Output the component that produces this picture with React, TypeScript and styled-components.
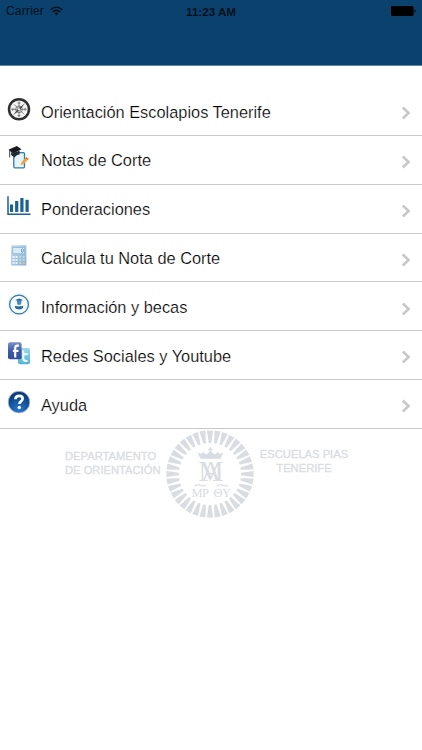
import type { ReactNode } from "react";
import styled, { createGlobalStyle } from "styled-components";

const navy = "#0a416d";
const sealGrey = "#d9dde1";
const chartBlue = "#1a628f";

const GlobalStyle = createGlobalStyle`
  body {
    margin: 0;
    background: #fff;
    font-family: "Liberation Sans", Arial, sans-serif;
  }
`;

const Screen = styled.div`
  width: 100%;
  height: 750px;
  overflow: hidden;
  background: #fff;
`;

const Header = styled.header`
  box-sizing: border-box;
  height: 66px;
  background: ${navy};
  border-bottom: 1px solid #5f87a5;
`;

const StatusBar = styled.div`
  display: grid;
  grid-template-columns: 1fr auto 1fr;
  align-items: center;
  height: 22px;
  padding: 0 6px;
  color: #03101c;
`;

const Carrier = styled.div`
  display: flex;
  align-items: center;
  gap: 6px;
  font-size: 12px;
  letter-spacing: 0.2px;
`;

const Clock = styled.div`
  font-size: 11.6px;
  font-weight: bold;
`;

const Battery = styled.svg`
  justify-self: end;
`;

const Menu = styled.ul`
  list-style: none;
  margin: 0;
  padding: 21px 0 0;
`;

const Row = styled.li`
  display: flex;
  align-items: flex-start;
  box-sizing: border-box;
  height: 48.87px;
  padding: 9.5px 11px 0 7px;
  border-bottom: 1px solid #c8c8c8;
`;

const IconBox = styled.svg`
  width: 24px;
  height: 24px;
  flex: none;
`;

/* the white stroke trims the glyphs down to a light weight */
const Label = styled.span`
  flex: 1;
  margin: 5px 0 0 10px;
  color: #000;
  font-size: 16.38px;
  line-height: 20px;
  white-space: nowrap;
  -webkit-text-stroke: 0.22px #fff;
`;

const Arrow = styled.svg`
  flex: none;
  margin-top: 9.7px;
`;

const Watermark = styled.div`
  display: flex;
  align-items: flex-start;
  margin-left: 65px;
  color: ${sealGrey};
`;

const WatermarkText = styled.div<{ $top: number; $align: "left" | "center" }>`
  width: 96px;
  margin-top: ${(p) => p.$top}px;
  font-size: 11.2px;
  line-height: 13.6px;
  text-align: ${(p) => p.$align};
  white-space: nowrap;
  -webkit-text-stroke: 0.3px ${sealGrey};
`;

const SealBox = styled.svg`
  flex: none;
  margin: 1px 2px 0 5px;
`;

const CompassIcon = () => (
  <IconBox viewBox="0 0 24 24">
    <circle cx="12" cy="12.3" r="10" fill="#f4f4f4" stroke="#303033" strokeWidth="2.5" />
    <g stroke="#666" strokeWidth="0.8" fill="none">
      <path d="M12 4.5v15.6M4.2 12.3h15.6M7 7.3l10 10" />
      <circle cx="12" cy="12.3" r="3.4" />
      <path d="M10.5 6h3M10.5 18.6h3M5.8 10.8v3M18.2 10.8v3" />
    </g>
    <path d="M18 6.3L12.8 13.1 6 18.3l5.2-6.8z" fill="#444" />
    <circle cx="12" cy="12.3" r="1.1" fill="#fff" />
  </IconBox>
);

const GradesIcon = () => (
  <IconBox viewBox="0 0 24 24">
    <rect x="6.8" y="7.6" width="10.7" height="15.2" rx="1" fill="#e5f3fa" stroke="#317da9" strokeWidth="1.3" />
    <path d="M13.6 20.2l1-3.2 4.8-5 2.2 2-4.8 5z" fill="#f4a33c" />
    <path d="M18.5 13l1-1.1 2.2 2-1 1.1z" fill="#d97b32" />
    <path d="M1.4 4.8L9.8 1l4.7 3.3-8.2 4.3z" fill="#17191c" />
    <path d="M4.1 7l2.2 1.6L12.6 5.4v4.2c-2.5.3-4 1.4-5.2 3L4.1 10z" fill="#24272b" />
    <path d="M2.7 5.5v7" stroke="#24272b" strokeWidth="0.9" />
  </IconBox>
);

const ChartIcon = () => (
  <IconBox viewBox="0 0 24 24">
    <path d="M1 2.2v18.1h22.5" fill="none" stroke={chartBlue} strokeWidth="1.5" />
    <g fill={chartBlue}>
      <rect x="2.9" y="10.5" width="3.2" height="7.4" />
      <rect x="8.1" y="7" width="3.2" height="10.9" />
      <rect x="13.3" y="4" width="3.2" height="13.9" />
      <rect x="18.5" y="5.8" width="3.2" height="12.1" />
    </g>
  </IconBox>
);

const CalculatorIcon = () => (
  <IconBox viewBox="0 0 24 24">
    <defs>
      <linearGradient id="calc" x1="0" y1="0" x2="1" y2="1">
        <stop offset="0" stopColor="#c3dbee" />
        <stop offset="1" stopColor="#8aafcf" />
      </linearGradient>
    </defs>
    <rect x="4.2" y="2.2" width="15.2" height="20.4" rx="0.8" fill="url(#calc)" />
    <rect x="5.8" y="4.4" width="11.8" height="6.4" fill="#d8edf9" stroke="#7ba7cc" strokeWidth="0.6" />
    <ellipse cx="15.4" cy="7.6" rx="1" ry="1.8" fill="none" stroke="#5487b7" strokeWidth="0.8" />
    <g fill="#e6f3fd">
      <rect x="5.6" y="13" width="2" height="2" />
      <rect x="8.5" y="13" width="2" height="2" />
      <rect x="5.6" y="16" width="2" height="2" />
      <rect x="8.5" y="16" width="2" height="2" />
      <rect x="5.6" y="19" width="2" height="2" />
      <rect x="8.5" y="19" width="2" height="2" />
    </g>
    <g fill="#b9d6ea">
      <rect x="12.2" y="13" width="2.2" height="2" />
      <rect x="15.5" y="13" width="2.2" height="2" />
      <rect x="12.2" y="16" width="2.2" height="2" />
      <rect x="15.5" y="16" width="2.2" height="2" />
      <rect x="12.2" y="19" width="2.2" height="2" />
    </g>
    <rect x="15.5" y="19" width="2.4" height="2" fill="#d9c391" />
  </IconBox>
);

const StudentIcon = () => (
  <IconBox viewBox="0 0 24 24">
    <circle cx="12" cy="12.5" r="11.4" fill="#eef4f8" />
    <circle cx="12" cy="12.5" r="9.4" fill="#f5fbff" stroke="#3479ad" strokeWidth="1.3" />
    <path d="M8.3 8l3.9-1.6L16 8l-3.8 1.6z" fill="#23659b" />
    <path d="M9.9 8.6h4.5v2.2a2.2 2.2 0 0 1-4.5 0z" fill="#4b8bbd" />
    <path d="M8 13.8c1.4.8 6.8.8 8.2 0 .5 2.4-1.4 3.6-4.1 3.6s-4.6-1.2-4.1-3.6z" fill="#23659b" />
  </IconBox>
);

const SocialIcon = () => (
  <IconBox viewBox="0 0 24 24">
    <defs>
      <linearGradient id="fb" x1="0" y1="0" x2="0" y2="1">
        <stop offset="0" stopColor="#7d92c6" />
        <stop offset="0.5" stopColor="#3d5ba3" />
        <stop offset="1" stopColor="#2f4f9b" />
      </linearGradient>
      <linearGradient id="tw" x1="0" y1="0" x2="0" y2="1">
        <stop offset="0" stopColor="#9ed9ec" />
        <stop offset="1" stopColor="#55b4d6" />
      </linearGradient>
    </defs>
    <rect x="11" y="7" width="12" height="16.2" rx="2" fill="url(#tw)" />
    <path
      d="M16.2 10v7.2c0 1.9 1 2.8 3.6 2.8M16.2 13.2h3.6"
      fill="none"
      stroke="#e8f7fc"
      strokeWidth="2.2"
      strokeLinecap="round"
    />
    <rect x="1" y="1.3" width="13.6" height="17" rx="2" fill="url(#fb)" />
    <path
      d="M11.9 4.6h-1.2c-1.8 0-2.5.9-2.5 2.5v9.4M5.9 9.9h5.6"
      fill="none"
      stroke="#fff"
      strokeWidth="2.2"
    />
  </IconBox>
);

const HelpIcon = () => (
  <IconBox viewBox="0 0 24 24">
    <defs>
      <radialGradient id="help" cx="0.5" cy="0.85" r="0.85">
        <stop offset="0" stopColor="#2a78cf" />
        <stop offset="0.55" stopColor="#12519c" />
        <stop offset="1" stopColor="#0a3470" />
      </radialGradient>
    </defs>
    <circle cx="12" cy="12.1" r="10.8" fill="url(#help)" stroke="#a9bacd" strokeWidth="0.8" />
    <path
      d="M8.4 9.3c.1-2.3 1.5-3.4 3.7-3.4 2.1 0 3.5 1 3.5 2.8 0 2.5-3.2 2.5-3.2 5.2"
      fill="none"
      stroke="#fff"
      strokeWidth="2.7"
    />
    <circle cx="12.3" cy="17.4" r="1.7" fill="#fff" />
  </IconBox>
);

const RAYS = 36;

const Seal = () => (
  <SealBox width="88" height="88" viewBox="-44 -44 88 88">
    <g fill={sealGrey}>
      {Array.from({ length: RAYS }, (_, i) => (
        <path key={i} d="M-3.1 -43.6h6.2L1.2 -31h-2.4z" transform={`rotate(${(i * 360) / RAYS})`} />
      ))}
      <path d="M-12.5 -21.5l3.5 1.5 2-2 3.5 2.5L0.5 -23l4 3.5 3.5-2.5 2 2 3.5-1.5-3 6.3h-20z" />
      <path d="M-1.7 -24.5h4.4M0.5 -26.7v5" stroke={sealGrey} strokeWidth="1.4" />
    </g>
    <g fill={sealGrey} fontFamily="Liberation Serif, serif" textAnchor="middle">
      <text x="1" y="7" fontSize="30" textLength="25" lengthAdjust="spacingAndGlyphs">
        M
      </text>
      <text x="1" y="7" fontSize="30" textLength="19" lengthAdjust="spacingAndGlyphs">
        A
      </text>
    </g>
    <g fill={sealGrey} fontFamily="Liberation Serif, serif" fontSize="12.5">
      <text x="-18.5" y="22.5" textLength="17.5">
        MP
      </text>
      <text x="3.5" y="22.5" textLength="17.5">
        ΘY
      </text>
    </g>
    <path
      d="M-15.5 12.2q3.5-2.500 6-1t5.500 0M6.500 12.200q3.500-2.500 6-1t5 0"
      fill="none"
      stroke={sealGrey}
      strokeWidth="1.1"
    />
  </SealBox>
);

interface MenuItem {
  label: string;
  icon: ReactNode;
}

const items: MenuItem[] = [
  { label: "Orientación Escolapios Tenerife", icon: <CompassIcon /> },
  { label: "Notas de Corte", icon: <GradesIcon /> },
  { label: "Ponderaciones", icon: <ChartIcon /> },
  { label: "Calcula tu Nota de Corte", icon: <CalculatorIcon /> },
  { label: "Información y becas", icon: <StudentIcon /> },
  { label: "Redes Sociales y Youtube", icon: <SocialIcon /> },
  { label: "Ayuda", icon: <HelpIcon /> },
];

const App = () => {
  return (
    <>
      <GlobalStyle />
      <Screen>
        <Header>
          <StatusBar>
            <Carrier>
              Carrier
              <svg width="13" height="10" viewBox="0 0 13 10">
                <g fill="none" stroke="#03101c" strokeWidth="1.6">
                  <path d="M0.7 3.7a8.2 8.2 0 0 1 11.6 0" />
                  <path d="M2.9 5.9a5.1 5.1 0 0 1 7.2 0" />
                </g>
                <path d="M4.5 7.4a2.9 2.9 0 0 1 4 0l-2 2.1z" fill="#03101c" />
              </svg>
            </Carrier>
            <Clock>11:23 AM</Clock>
            <Battery width="25" height="10" viewBox="0 0 25 10">
              <rect x="0" y="0" width="22.5" height="10" rx="1.2" fill="#000" />
              <path d="M23.2 3.3q1.5.4 1.5 1.7t-1.5 1.7z" fill="#03101c" />
            </Battery>
          </StatusBar>
        </Header>
        <Menu>
          {items.map((item) => (
            <Row key={item.label}>
              {item.icon}
              <Label>{item.label}</Label>
              <Arrow width="10" height="14" viewBox="0 0 10 14">
                <path d="M1.8 1.5L7.6 7 1.8 12.5" fill="none" stroke="#c7c7cc" strokeWidth="2.5" />
              </Arrow>
            </Row>
          ))}
        </Menu>
        <Watermark>
          <WatermarkText $top={21} $align="left">
            DEPARTAMENTO
            <br />
            DE ORIENTACIÓN
          </WatermarkText>
          <Seal />
          <WatermarkText $top={19} $align="center">
            ESCUELAS PIAS
            <br />
            TENERIFE
          </WatermarkText>
        </Watermark>
      </Screen>
    </>
  );
};

export default App;
